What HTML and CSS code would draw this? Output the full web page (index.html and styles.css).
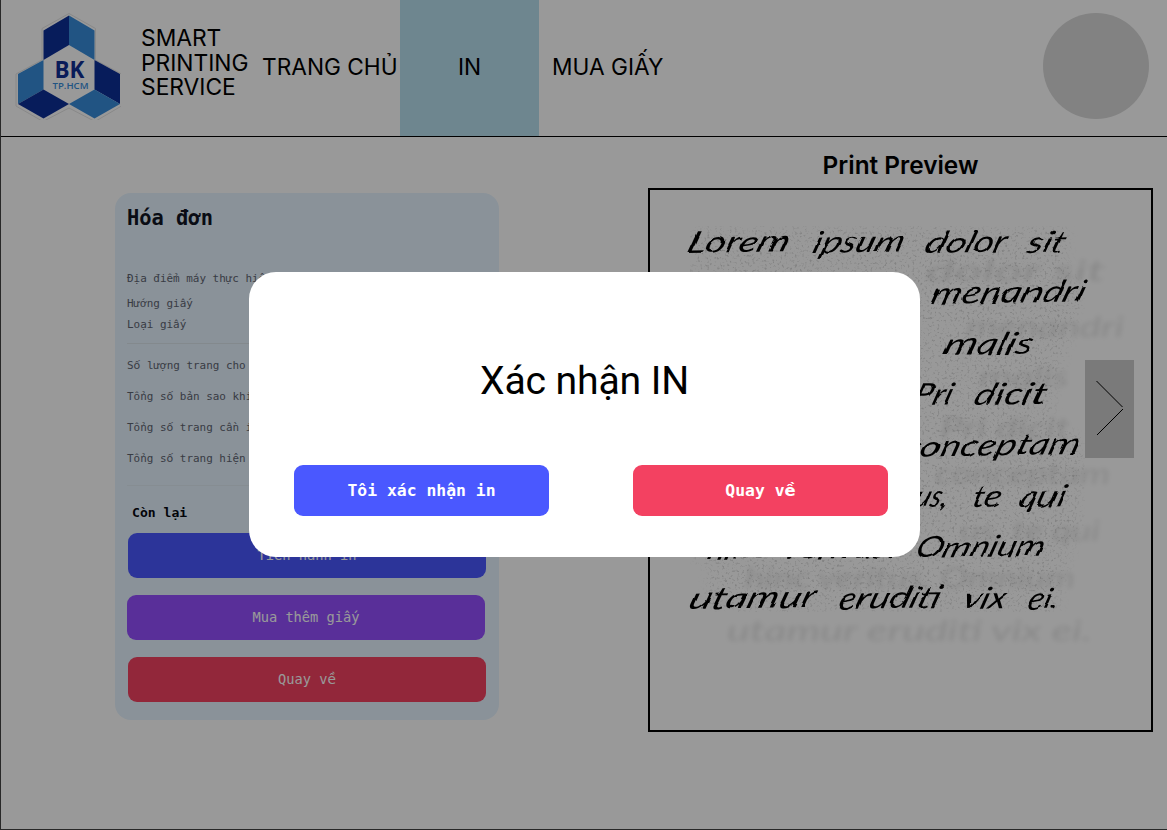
FILE: index.html
```html
<!DOCTYPE html>
<html lang="vi">
<head>
<meta charset="utf-8">
<title>Smart Printing Service</title>
<link rel="stylesheet" href="styles.css">
</head>
<body>
<div class="page">
  <header class="header">
    <svg class="logo" width="120" height="120" viewBox="0 0 120 120">
      <path class="logo-edge" d="M52 5.500 78.500 20.500V52L104.500 66V98L78 113.500 52 100 26 113.500-1 98V66L25 52V20.500Z" transform="translate(16 8)"/>
      <g transform="translate(16 8)">
        <path class="dark" d="M52 7.500V37L26.500 52V22.500Z"/>
        <path class="light" d="M52 7.500 77.500 22.500V52L52 37Z"/>
        <path class="light" d="M26.500 52V81.500L1 96V66Z"/>
        <path class="dark" d="M26.500 81.500 52 96 26.500 110.500 1 96Z"/>
        <path class="dark" d="M77.500 52 103 66V96L77.500 81.500Z"/>
        <path class="light" d="M77.500 81.500 103 96 77.500 110.500 52 96Z"/>
        <text class="bk" x="37.500" y="70" textLength="30" lengthAdjust="spacingAndGlyphs">BK</text>
        <text class="hcm" x="35.500" y="80.500" textLength="36" lengthAdjust="spacingAndGlyphs">TP.HCM</text>
      </g>
    </svg>
    <div class="brand">SMART<br>PRINTING<br>SERVICE</div>
    <nav class="nav">
      <a class="nav-item home">TRANG CHỦ</a>
      <a class="nav-item active">IN</a>
      <a class="nav-item buy">MUA GIẤY</a>
    </nav>
    <div class="avatar"></div>
  </header>
  <main class="main">
    <section class="invoice">
      <h2 class="invoice-title">Hóa đơn</h2>
      <div class="row place">Địa điểm máy thực hiện</div>
      <div class="row short">Hướng giấy</div>
      <div class="row short">Loại giấy</div>
      <hr class="rule">
      <div class="row tall">S<span class="tone">ố</span> lượng trang cho</div>
      <div class="row tall">Tổng s<span class="tone">ố</span> bản sao khi</div>
      <div class="row tall">Tổng s<span class="tone">ố</span> trang cần in</div>
      <div class="row tall">Tổng s<span class="tone">ố</span> trang hiện</div>
      <hr class="rule last">
      <div class="remain">Còn lại</div>
      <div class="actions">
        <button class="btn blue">Tiến hành in</button>
        <button class="btn purple">Mua thêm giấy</button>
        <button class="btn red">Quay v<span class="tone">ề</span></button>
      </div>
    </section>
    <section class="preview">
      <h2 class="preview-title">Print Preview</h2>
      <div class="paper">
        <svg class="sheet" width="501" height="540" viewBox="650 190 501 540">
          <defs>
            <filter id="soft" x="-10%" y="-10%" width="120%" height="120%"><feGaussianBlur stdDeviation="2.800"/></filter>
            <filter id="pen" x="-5%" y="-5%" width="110%" height="110%">
              <feTurbulence type="fractalNoise" baseFrequency="0.06" numOctaves="1" seed="4" result="n"/>
              <feDisplacementMap in="SourceGraphic" in2="n" scale="4" xChannelSelector="R" yChannelSelector="G"/>
              <feGaussianBlur stdDeviation="0.500"/>
            </filter>
            <filter id="grain" x="0" y="0" width="100%" height="100%">
              <feTurbulence type="fractalNoise" baseFrequency="0.4" numOctaves="2" seed="8" result="n"/>
              <feColorMatrix in="n" values="0 0 0 0 0  0 0 0 0 0  0 0 0 0 0  4 0 0 0 -2.200" result="dots"/>
              <feGaussianBlur in="SourceGraphic" stdDeviation="6" result="area"/>
              <feComposite in="dots" in2="area" operator="in"/>
            </filter>
          </defs>
          <path class="grain" filter="url(#grain)" d="M690 226H1068V270L1085 290 1060 370 1050 420 1085 440 1080 520 1060 590V612H708V560H690Z"/>
          <g class="ghost" filter="url(#soft)">
            <text x="926" y="281" textLength="180" lengthAdjust="spacingAndGlyphs">dolor sit</text>
            <text x="966" y="337" textLength="158" lengthAdjust="spacingAndGlyphs">menandri</text>
            <text x="979" y="387" textLength="90" lengthAdjust="spacingAndGlyphs">malis</text>
            <text x="940" y="438" textLength="130" lengthAdjust="spacingAndGlyphs">Pri dicit</text>
            <text x="935" y="484" textLength="175" lengthAdjust="spacingAndGlyphs">conceptam</text>
            <text x="960" y="541" textLength="140" lengthAdjust="spacingAndGlyphs">us, te qui</text>
            <text x="745" y="588" textLength="330" lengthAdjust="spacingAndGlyphs">hinc veritus. Omnium</text>
            <text x="727" y="641" textLength="365" lengthAdjust="spacingAndGlyphs">utamur eruditi vix ei.</text>
          </g>
          <g class="hand" filter="url(#pen)">
            <text transform="translate(686 253) rotate(-1) skewX(-18)" textLength="101" lengthAdjust="spacingAndGlyphs">Lorem</text>
            <text transform="translate(811 253) rotate(-1) skewX(-18)" textLength="91" lengthAdjust="spacingAndGlyphs">ipsum</text>
            <text transform="translate(924 253) rotate(-1) skewX(-18)" textLength="80" lengthAdjust="spacingAndGlyphs">dolor</text>
            <text transform="translate(1025 253) rotate(-1) skewX(-18)" textLength="38" lengthAdjust="spacingAndGlyphs">sit</text>
            <text transform="translate(929 304) rotate(-1) skewX(-18)" textLength="154" lengthAdjust="spacingAndGlyphs">menandri</text>
            <text transform="translate(942 355) rotate(-1) skewX(-18)" textLength="88" lengthAdjust="spacingAndGlyphs">malis</text>
            <text transform="translate(912 405) rotate(-1) skewX(-18)" textLength="38" lengthAdjust="spacingAndGlyphs">Pri</text>
            <text transform="translate(972 405) rotate(-1) skewX(-18)" textLength="72" lengthAdjust="spacingAndGlyphs">dicit</text>
            <text transform="translate(901 457) rotate(-1) skewX(-18)" textLength="176" lengthAdjust="spacingAndGlyphs">conceptam</text>
            <text transform="translate(913 507) rotate(-1) skewX(-18)" textLength="34" lengthAdjust="spacingAndGlyphs">us,</text>
            <text transform="translate(970 507) rotate(-1) skewX(-18)" textLength="29" lengthAdjust="spacingAndGlyphs">te</text>
            <text transform="translate(1017 507) rotate(-1) skewX(-18)" textLength="46" lengthAdjust="spacingAndGlyphs">qui</text>
            <text transform="translate(705 559) rotate(-1) skewX(-18)" textLength="62" lengthAdjust="spacingAndGlyphs">hinc</text>
            <text transform="translate(781 559) rotate(-1) skewX(-18)" textLength="114" lengthAdjust="spacingAndGlyphs">veritus.</text>
            <text transform="translate(914 558) rotate(-1) skewX(-18)" textLength="128" lengthAdjust="spacingAndGlyphs">Omnium</text>
            <text transform="translate(688 609) rotate(-1) skewX(-18)" textLength="125" lengthAdjust="spacingAndGlyphs">utamur</text>
            <text transform="translate(836 609) rotate(-1) skewX(-18)" textLength="102" lengthAdjust="spacingAndGlyphs">eruditi</text>
            <text transform="translate(961 609) rotate(-1) skewX(-18)" textLength="43" lengthAdjust="spacingAndGlyphs">vix</text>
            <text transform="translate(1026 609) rotate(-1) skewX(-18)" textLength="31" lengthAdjust="spacingAndGlyphs">ei.</text>
          </g>
          <rect class="next" x="1085" y="360" width="49" height="98"/>
          <path class="chevron" d="M1096.500 381 1122.500 407M1123 409 1097 435"/>
        </svg>
      </div>
    </section>
  </main>
</div>
<div class="overlay">
  <div class="modal">
    <h1 class="modal-title">Xác nhận IN</h1>
    <div class="modal-actions">
      <button class="modal-btn blue">Tôi xác nhận in</button>
      <button class="modal-btn red">Quay v<span class="tone">ề</span></button>
    </div>
  </div>
</div>
</body>
</html>
```

FILE: styles.css
```css
* { box-sizing: border-box; }
body { margin: 0; background: #fff; color: #000; font-family: Inter, sans-serif; }
h1, h2 { margin: 0; font-weight: 400; }
button { border: 0; padding: 0; color: #fff; font-family: "DejaVu Sans Mono", monospace; }
.tone { font-family: "DejaVu Sans", sans-serif; }

.page { width: 1167px; height: 830px; border-left: 1px solid #444; border-bottom: 1px solid #444; overflow: hidden; }
.header { display: flex; align-items: center; height: 137px; padding-right: 18px; border-bottom: 1px solid #000; }
.logo { flex: none; margin-top: -17px; }
.dark { fill: #0d2f98; }
.light { fill: #378cdb; }
.logo-edge { fill: #fff; stroke: #e4e4e4; stroke-width: 1; }
.bk { font: 700 24px "Open Sans", sans-serif; fill: #0f2f95; }
.hcm { font: 600 9.500px "Open Sans", sans-serif; fill: #378cdb; }
.brand { width: 107px; margin: -10px 0 0 20px; font-size: 22.800px; line-height: 24.500px; white-space: nowrap; }
.nav { display: flex; align-self: stretch; margin-left: 14px; font-size: 22.700px; white-space: nowrap; }
.nav-item { display: flex; align-items: center; justify-content: center; padding-bottom: 4px; }
.home { width: 138px; justify-content: flex-start; }
.active { width: 139px; background: #b7dfef; }
.buy { margin-left: 13px; }
.avatar { width: 106px; height: 106px; margin: -4px 0 0 auto; border-radius: 50%; background: #d9d9d9; }

.main { display: flex; align-items: flex-start; justify-content: space-between; padding: 0 14px 0 114px; }
.invoice { width: 384px; height: 527px; margin-top: 56px; padding: 9px 13px 9px 12px; border-radius: 16px; background: #e6f4ff; font-family: "DejaVu Sans Mono", monospace; }
.invoice-title { height: 62px; font-size: 20.400px; font-weight: 700; line-height: 32px; color: #111424; }
.row { display: flex; align-items: center; font-size: 10.950px; color: #5f6472; white-space: pre; }
.place { height: 28px; }
.short { height: 21.500px; }
.place + .short { padding-top: 1px; }
.tall { height: 30.900px; }
.rule { height: 1px; margin: 8px 0 6px; border: 0; background: #dbe4ec; }
.rule.last { margin: 11px 0 17px; background: #dfebf4; }
.remain { height: 20px; padding-left: 5px; font-size: 13.100px; font-weight: 700; line-height: 20px; color: #05070f; }
.actions { display: flex; flex-direction: column; gap: 17px; margin-top: 10px; }
.btn { width: 358px; height: 45px; margin-left: 1px; border-radius: 9px; font-size: 13.700px; }
.btn.purple { margin-left: 0; }
.blue { background: #4a58ff; }
.purple { background: #944fff; }
.red { background: #f34161; }

.preview { width: 505px; padding-top: 13px; }
.preview-title { height: 38px; font-size: 24.400px; font-weight: 600; line-height: 30px; text-align: center; }
.paper { height: 544px; border: 2px solid #000; }
.sheet { display: block; }
.hand { font: italic 400 30px Lato, sans-serif; fill: #000; }
.ghost { font: italic 400 29px Lato, sans-serif; fill: #000; opacity: .1; }
.grain { fill: #000; opacity: .14; }
.next { fill: #cbcbcb; }
.chevron { fill: none; stroke: #000; stroke-width: 1; }

.overlay { position: fixed; inset: 0; background: rgba(0, 0, 0, .4); }
.modal { width: 671px; height: 284.500px; margin: 272px 0 0 249px; padding: 79px 32px 0 45px; border-radius: 27px; background: #fff; }
.modal-title { height: 114px; padding-right: 13px; font-family: Roboto, sans-serif; font-size: 39.200px; letter-spacing: -.15px; line-height: 60px; text-align: center; }
.modal-actions { display: flex; justify-content: space-between; }
.modal-btn { width: 255px; height: 50.500px; border-radius: 9px; font-size: 16.400px; font-weight: 700; }
```
